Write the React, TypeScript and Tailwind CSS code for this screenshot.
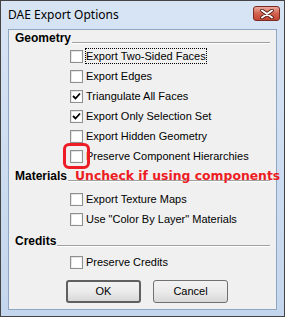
import React from "react";

const ui = { fontFamily: '"Liberation Sans", Arial, sans-serif' };

const CheckBox = ({ checked }: { checked?: boolean }) => (
	<span className="flex items-center justify-center w-[13px] h-[13px] border border-[#8e8f8f] bg-gradient-to-br from-[#dcdcdc] to-white shrink-0">
		<span className="flex items-center justify-center w-[9px] h-[9px] bg-white">
			{checked && (
				<svg width="9" height="9" viewBox="0 0 9 9">
					<path d="M1 4 L3.5 6.5 L8 1.5" fill="none" stroke="#000" strokeWidth="1.8" />
				</svg>
			)}
		</span>
	</span>
);

const Row = ({
	label,
	checked,
	focus,
}: {
	label: string;
	checked?: boolean;
	focus?: boolean;
}) => (
	<div className="flex items-center h-[20px] pl-[61px]">
		<CheckBox checked={checked} />
		<span
			className={
				"ml-[3px] text-[11px] leading-[14px] text-black whitespace-nowrap " +
				(focus ? "outline outline-1 outline-dotted outline-black" : "")
			}
		>
			{label}
		</span>
	</div>
);

const Header = ({ title, children }: { title: string; children?: React.ReactNode }) => (
	<div className="relative flex items-end h-[13px] pl-[6px] pr-[6px]">
		<span className="text-[12px] leading-[13px] font-bold text-black">{title}</span>
		<span className="flex-1 h-[2px] mb-[1px] ml-[1px] border-t border-[#a0a0a0] border-b-white border-b" />
		{children}
	</div>
);

const Button = ({ label, primary }: { label: string; primary?: boolean }) => (
	<button
		className={
			"w-[75px] h-[23px] rounded-[3px] text-[11px] text-black bg-gradient-to-b from-[#f2f2f2] via-[#ebebeb] to-[#d8d8d8] " +
			(primary ? "border-2 border-[#606060]" : "border border-[#707070]")
		}
	>
		{label}
	</button>
);

export default function App() {
	return (
		<div
			style={ui}
			className="w-[285px] h-[317px] flex flex-col border border-[#444] bg-gradient-to-b from-[#d7e4f4] to-[#c4d6ed] overflow-hidden"
		>
			{/* title bar */}
			<div className="flex items-center justify-between h-[28px] pl-[7px] pr-[4px]">
				<span
					className="text-[12px] text-black"
					style={{ fontFamily: '"Noto Sans", "Open Sans", sans-serif' }}
				>
					DAE Export Options
				</span>
				<span className="flex items-center justify-center w-[27px] h-[15px] -mt-[3px] rounded-[3px] border border-[#7a2a1e] bg-gradient-to-b from-[#e9a99c] via-[#d2624f] to-[#c24532]">
					<svg width="14" height="10" viewBox="0 0 14 10">
						<path
							d="M2 1.5 L12 8.5 M12 1.5 L2 8.5"
							stroke="#4a1a14"
							strokeWidth="3.6"
							strokeLinecap="round"
						/>
						<path
							d="M2 1.5 L12 8.5 M12 1.5 L2 8.5"
							stroke="#fff"
							strokeWidth="2"
							strokeLinecap="round"
						/>
					</svg>
				</span>
			</div>

			{/* client area */}
			<div className="relative flex flex-col mx-[7px] h-[281px] bg-[#f0f0f0] border border-[#8fa6c2] pt-[2px]">
				<Header title="Geometry" />
				<div className="flex flex-col mt-[1px]">
					<Row label="Export Two-Sided Faces" focus />
					<Row label="Export Edges" />
					<Row label="Triangulate All Faces" checked />
					<Row label="Export Only Selection Set" checked />
					<Row label="Export Hidden Geometry" />
					<Row label="Preserve Component Hierarchies" />
				</div>

				<div className="mt-[4px]">
					<Header title="Materials">
						<span
							className="absolute left-[66px] -top-[2px] text-[12.4px] leading-[16px] font-bold text-[#ee1c24] whitespace-nowrap"
							style={{ fontFamily: '"DejaVu Sans", Verdana, sans-serif' }}
						>
							Uncheck if using components
						</span>
					</Header>
				</div>
				<div className="flex flex-col mt-[6px]">
					<Row label="Export Texture Maps" />
					<Row label={'Use "Color By Layer" Materials'} />
				</div>

				<div className="mt-[6px]">
					<Header title="Credits" />
				</div>
				<div className="flex flex-col mt-[4px]">
					<Row label="Preserve Credits" />
				</div>

				<div className="flex gap-[12px] pl-[57px] mt-[8px]">
					<Button label="OK" primary />
					<Button label="Cancel" />
				</div>

				{/* annotation */}
				<span className="absolute left-[54px] top-[113px] w-[27px] h-[26px] rounded-[6px] border-[3px] border-[#ee1c24]" />
			</div>
		</div>
	);
}
